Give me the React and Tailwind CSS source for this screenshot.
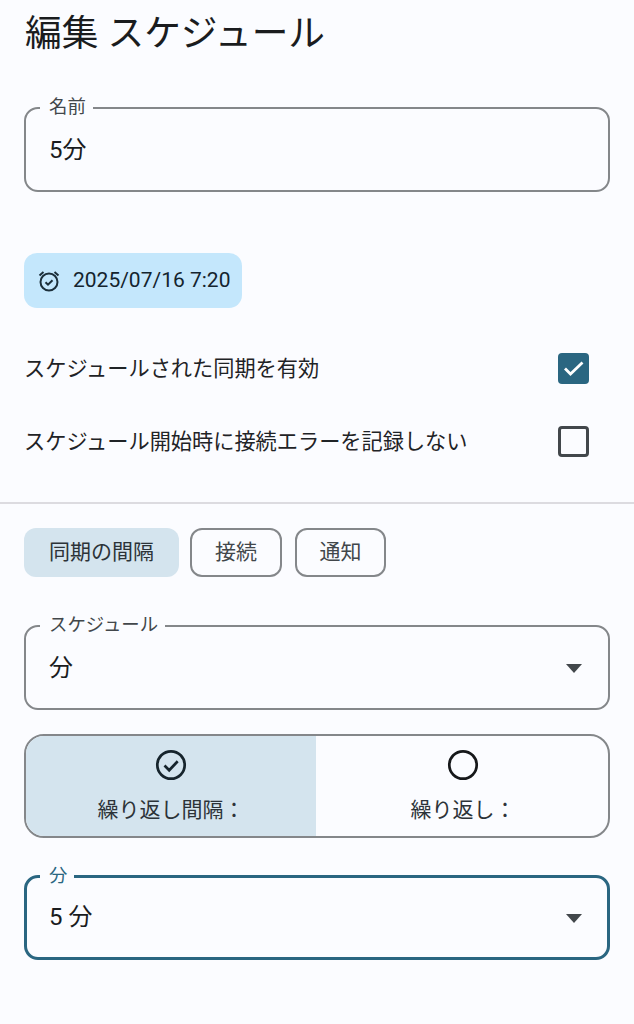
const font = { fontFamily: '"Roboto", "Noto Sans CJK JP", sans-serif' };

function Field({ label, value, focused, select, className = "" }) {
  return (
    <div
      className={`relative flex h-[85px] items-start justify-between rounded-[14px] pl-[23px] pr-[25px] ${
        focused ? "border-[3px] border-[#2a6681] pt-[23px]" : "border-2 border-[#84878a] pt-[25px]"
      } ${className}`}
    >
      <span
        className={`absolute top-[-14px] bg-[#fbfcff] pl-[9px] pr-[7px] text-[18.4px] leading-[24px] ${
          focused ? "left-[13px] text-[#2a6681]" : "left-[14px] text-[#42474b]"
        }`}
      >
        {label}
      </span>
      <span className={`text-[24px] leading-[32px] text-[#1a1c1e] ${focused ? "ml-[-1px]" : ""}`}>{value}</span>
      {select && (
        <svg width="16" height="9" viewBox="0 0 16 9" className={`${focused ? "mt-[13px] mr-[0px]" : "mt-[12px] mr-[1px]"}`}>
          <path d="M0 0h16L8 9z" fill="#42474b" />
        </svg>
      )}
    </div>
  );
}

function Row({ label, checked }) {
  return (
    <div className="flex h-[73px] items-center justify-between pr-[21px]">
      <span className="text-[21.2px] leading-[28px] text-[#1f2326]">{label}</span>
      {checked ? (
        <span className="flex h-[31px] w-[31px] items-center justify-center rounded-[4px] bg-[#2a6681]">
          <svg width="23" height="23" viewBox="0 0 23 23" fill="none">
            <path d="M3 11.5l5.5 5.5L20.5 5.5" stroke="#fff" strokeWidth="2.8" />
          </svg>
        </span>
      ) : (
        <span className="h-[31px] w-[31px] rounded-[4px] border-[3px] border-[#42474b]" />
      )}
    </div>
  );
}

function Tab({ label, active, className = "" }) {
  return (
    <span
      className={`flex h-[49px] items-center justify-center rounded-[12px] text-[21px] ${
        active ? "bg-[#d4e4ee] text-[#2c3338]" : "border-2 border-[#84878a] text-[#42474b]"
      } ${className}`}
    >
      {label}
    </span>
  );
}

export default function App() {
  return (
    <div style={font} className="h-[1024px] w-[634px] overflow-hidden bg-[#fbfcff]">
      <div className="px-[24px]">
        <h1 className="mt-[11px] ml-[1px] text-[36.7px] leading-[46px] font-normal text-[#1a1c1e]">編集 スケジュール</h1>
        <Field label="名前" value="5分" className="mt-[50px]" />
        <div className="mt-[61px] flex h-[55px] w-[218px] items-center gap-[12px] rounded-[13px] bg-[#c4e7fc] pl-[13px]">
          <svg width="24" height="24" viewBox="0 0 24 24" fill="none" stroke="#1c2f3a" strokeWidth="2">
            <circle cx="12" cy="13" r="8.5" />
            <path d="M8.5 13.2l2.5 2.5 4.5-4.5M2.5 6.5L6.5 3M21.5 6.5L17.5 3" />
          </svg>
          <span className="text-[21px] font-[450] text-[#14242e]">2025/07/16 7:20</span>
        </div>
      </div>
      <div className="mt-[24px] px-[24px]">
        <Row label="スケジュールされた同期を有効" checked />
        <Row label="スケジュール開始時に接続エラーを記録しない" />
      </div>
      <div className="mt-[24px] h-[2px] bg-[#dcdbe0]" />
      <div className="px-[24px]">
        <div className="mt-[24px] flex">
          <Tab label="同期の間隔" active className="w-[155px]" />
          <Tab label="接続" className="ml-[11px] w-[92px]" />
          <Tab label="通知" className="ml-[13px] w-[91px]" />
        </div>
        <Field label="スケジュール" value="分" select className="mt-[48px]" />
        <div className="mt-[24px] flex h-[104px] overflow-hidden rounded-[20px] border-2 border-[#84878a]">
          <div className="flex w-[290px] flex-col items-center bg-[#d4e4ee] pt-[13px]">
            <svg width="32" height="32" viewBox="0 0 32 32" fill="none" stroke="#16242c" strokeWidth="2.7">
              <circle cx="16" cy="16" r="13.7" />
              <path d="M9.5 16.5l4.7 4.7 8.5-9" />
            </svg>
            <span className="mt-[15px] text-[21px] leading-[28px] text-[#2c3338]">繰り返し間隔：</span>
          </div>
          <div className="flex flex-1 flex-col items-center pt-[13px] pl-[2px]">
            <svg width="32" height="32" viewBox="0 0 32 32" fill="none" stroke="#16181a" strokeWidth="2.7">
              <circle cx="16" cy="16" r="13.7" />
            </svg>
            <span className="mt-[15px] text-[21px] leading-[28px] text-[#2c3338]">繰り返し：</span>
          </div>
        </div>
        <Field label="分" value="5 分" select focused className="mt-[37px]" />
      </div>
    </div>
  );
}
